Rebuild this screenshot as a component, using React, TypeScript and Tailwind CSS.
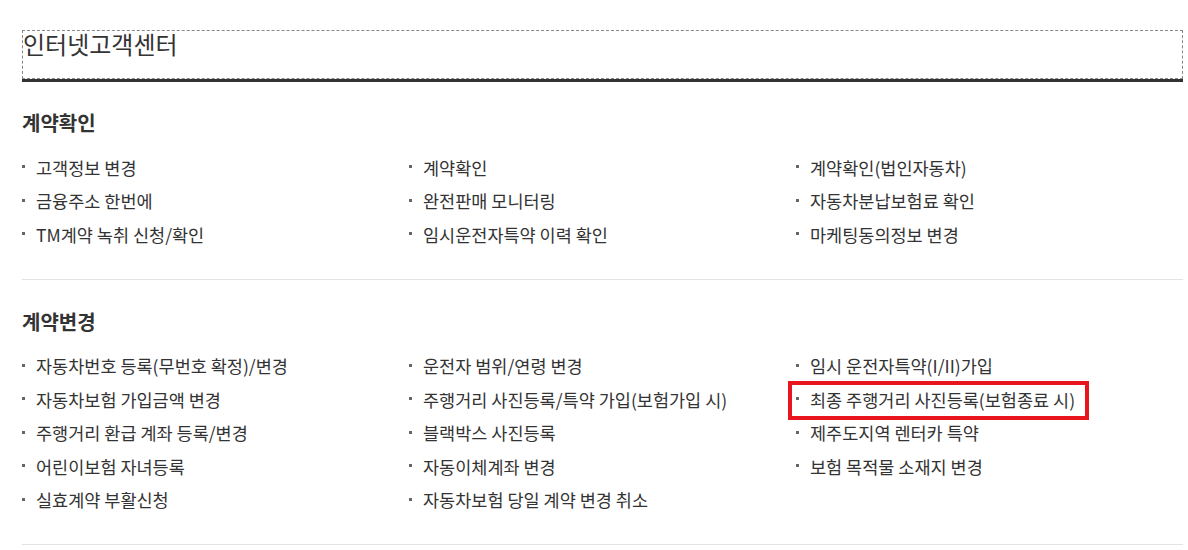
const font = { fontFamily: "'Noto Sans CJK KR', 'Noto Sans', sans-serif" };

type Item = { label: string; marked?: boolean };

const sections: { title: string; columns: Item[][] }[] = [
  {
    title: '계약확인',
    columns: [
      [{ label: '고객정보 변경' }, { label: '금융주소 한번에' }, { label: 'TM계약 녹취 신청/확인' }],
      [{ label: '계약확인' }, { label: '완전판매 모니터링' }, { label: '임시운전자특약 이력 확인' }],
      [{ label: '계약확인(법인자동차)' }, { label: '자동차분납보험료 확인' }, { label: '마케팅동의정보 변경' }],
    ],
  },
  {
    title: '계약변경',
    columns: [
      [
        { label: '자동차번호 등록(무번호 확정)/변경' },
        { label: '자동차보험 가입금액 변경' },
        { label: '주행거리 환급 계좌 등록/변경' },
        { label: '어린이보험 자녀등록' },
        { label: '실효계약 부활신청' },
      ],
      [
        { label: '운전자 범위/연령 변경' },
        { label: '주행거리 사진등록/특약 가입(보험가입 시)' },
        { label: '블랙박스 사진등록' },
        { label: '자동이체계좌 변경' },
        { label: '자동차보험 당일 계약 변경 취소' },
      ],
      [
        { label: '임시 운전자특약(I/II)가입' },
        { label: '최종 주행거리 사진등록(보험종료 시)', marked: true },
        { label: '제주도지역 렌터카 특약' },
        { label: '보험 목적물 소재지 변경' },
      ],
    ],
  },
];

function Row({ item }: { item: Item }) {
  return (
    <li className="flex h-[33.5px] items-center">
      <span className="relative inline-flex items-center">
        {item.marked && (
          <span className="pointer-events-none absolute -left-[8px] -right-[14px] -top-[6px] -bottom-[7px] border-4 border-[#e8141e]" />
        )}
        <span className="mr-[11px] mb-[2px] inline-block h-[3px] w-[3px] bg-[#666]" />
        <span className="text-[17.5px] leading-[26px] text-[#333]">{item.label}</span>
      </span>
    </li>
  );
}

export default function App() {
  return (
    <div className="min-h-[550px] bg-white pt-[30px]" style={font}>
      <div className="ml-[22px] w-[1161px]">
        <div className="border-b-[3px] border-[#333]">
          <h2 className="h-[49px] border border-dashed border-[#888] text-[24px] leading-[26px] text-[#333]">
            인터넷고객센터
          </h2>
        </div>

        {sections.map((section, i) => (
          <section
            key={section.title}
            className={`border-b border-[#e3e3e3] pb-[27px] ${i === 0 ? 'pt-[27px]' : 'pt-[28px]'}`}
          >
            <h3 className="mb-[14px] text-[20px] font-bold leading-[28px] text-[#333]">
              {section.title}
            </h3>
            <div className="grid grid-cols-3">
              {section.columns.map((col, c) => (
                <ul key={c}>
                  {col.map((item) => (
                    <Row key={item.label} item={item} />
                  ))}
                </ul>
              ))}
            </div>
          </section>
        ))}
      </div>
    </div>
  );
}
